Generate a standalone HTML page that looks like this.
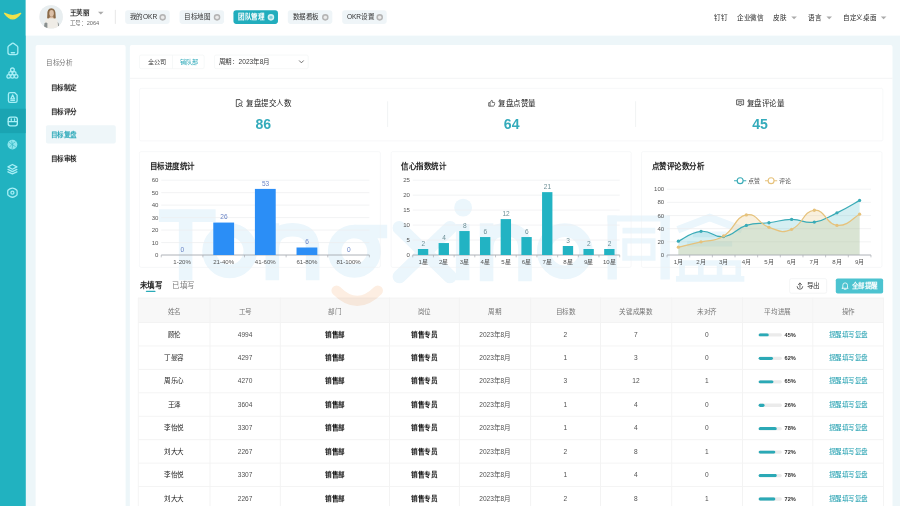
<!DOCTYPE html>
<html lang="zh-CN"><head><meta charset="utf-8">
<style>
*{margin:0;padding:0;box-sizing:border-box}
html,body{width:900px;height:506px;overflow:hidden;background:#edf6f9}
body{font-family:"Liberation Sans",sans-serif;color:#333}
#root{position:absolute;left:0;top:0;width:1920px;height:1080px;transform:scale(0.46875);transform-origin:0 0;background:#edf6f9;overflow:hidden}
.abs{position:absolute}
#side{left:0;top:0;width:55px;height:1080px;background:#21b2c0}
#side svg{position:absolute;left:0;top:0}
#hdr{left:55px;top:0;width:1865px;height:76px;background:#fff}
#subnav{left:76px;top:96px;width:192px;height:1000px;background:#fff;border-radius:4px}
#main{left:277px;top:96px;width:1627px;height:1000px;background:#fff;border-radius:4px}
.avatar{left:84px;top:11px;width:50px;height:50px;border-radius:50%;overflow:hidden;background:#e9ecec}
.uname{left:149px;top:17px;font-size:14px;font-weight:bold;color:#333;line-height:20px}
.uid{left:149px;top:40px;font-size:12px;color:#6a6a6a;line-height:18px}
.caret{width:0;height:0;border-left:6px solid transparent;border-right:6px solid transparent;border-top:6px solid #aaa}
.vdiv{left:245px;top:21px;width:2px;height:30px;background:#e6e6e6}
.tab{top:22px;height:29px;border-radius:6px;background:#eff5f8;font-size:14px;color:#333;font-weight:500;line-height:29px;padding-left:10px;white-space:nowrap}
.tab i{position:absolute;top:8px;width:14px;height:14px;border-radius:50%;border:3px solid #b3b3b3;background:#dcdcdc}
.tab i:after{content:"";position:absolute;left:1px;top:1px;width:6px;height:6px;border-radius:50%;background:#ececec}
.tab.on{background:#21adbd;color:#fff;font-weight:bold}
.tab.on i{border-color:#d5f1f4;background:#a8e0e7}
.tab.on i:after{background:#7fd0da}
.rt{top:28px;font-size:14px;color:#2a2a2a;font-weight:500;line-height:20px;white-space:nowrap}

.sn{left:108px;font-size:14px;color:#222;line-height:20px;font-weight:bold}
.sntitle{left:98px;top:123px;font-size:14px;color:#777;line-height:20px}
.snact{left:98px;top:267px;width:149px;height:39px;background:#eef6f9;border-radius:4px}
.bgrp{left:297px;top:117px;width:139px;height:30px;border:1px solid #eceff1;border-radius:4px;font-size:13px;line-height:28px}
.sel{left:457px;top:117px;width:201px;height:30px;border:1px solid #eceff1;border-radius:4px;font-size:14px;line-height:28px;color:#3a3a3a;padding-left:9px}
.hline{left:277px;top:166px;width:1627px;height:2px;background:#f2f4f5}
.card{border:1px solid #eef1f3;border-radius:4px;background:transparent}
.stl{font-size:14px;color:#333;line-height:20px;white-space:nowrap}
.snum{font-size:30px;font-weight:bold;color:#34abbb;line-height:34px;text-align:center}

.scol{top:188px;width:529px;height:113px}
.scol .stl{position:absolute;left:0;right:0;top:23px;text-align:center;font-size:16px;color:#222;font-weight:500}
.scol .snum{position:absolute;left:0;right:0;top:60px}
.sdiv{top:216px;width:2px;height:55px;background:#f0f2f3}

.th{font-size:14px;color:#777;text-align:center;white-space:nowrap;padding-top:4px}
.td{font-size:14px;color:#555;text-align:center;white-space:nowrap}
.tn{color:#222;font-weight:500}
.tg{color:#505050}
.tb{color:#111;font-weight:bold}
.ta{color:#1c9dae;font-weight:500}
.pt{display:inline-block;position:relative;width:50px;height:7px;border-radius:4px;background:#ebebeb;vertical-align:middle;margin-right:6px;overflow:hidden}
.pf{position:absolute;left:0;top:0;height:7px;border-radius:4px;background:#2ba9b6}
.pp{display:inline-block;width:26px;text-align:left;font-size:12px;color:#333;font-weight:bold;vertical-align:middle}
.ttab{top:597px;font-size:16px;line-height:24px;white-space:nowrap}
.btn{top:594px;height:32px;border-radius:4px;font-size:14px;line-height:30px;white-space:nowrap;font-weight:500}
.ctitle{position:absolute;left:21px;top:21px;font-size:16px;font-weight:bold;color:#222;line-height:22px;white-space:nowrap}
</style></head>
<body><div id="root">
<div id="side" class="abs">
<svg width="55" height="440" viewBox="0 0 55 440">
 <path d="M10 28.5 Q27 52 44 28.5 Q27 38 10 28.5 Z" fill="#efe24a" stroke="#efe24a" stroke-width="3" stroke-linejoin="round"/>
 <g fill="none" stroke="#a6eef5" stroke-width="2.8" stroke-linejoin="round" stroke-linecap="round">
  <path d="M17 101 L17 112 Q17 116.5 21.5 116.5 L33.5 116.5 Q38 116.5 38 112 L38 101 Q38 99 36 97.5 L29 92.5 Q27.5 91.5 26 92.5 L19 97.5 Q17 99 17 101 Z"/>
  <path d="M24 112.5 L31 112.5"/>
  <circle cx="26.5" cy="149" r="4"/>
  <circle cx="22.5" cy="156.5" r="3.8"/><circle cx="30.5" cy="156.5" r="3.8"/>
  <circle cx="18.5" cy="163" r="3.8"/><circle cx="26.5" cy="163" r="3.8"/><circle cx="34.5" cy="163" r="3.8"/>
  <path d="M18 201 L18 215 Q18 218.5 21.5 218.5 L33 218.5 Q36.5 218.5 36.5 215 L36.5 203 L31 197.5 L21.5 197.5 Q18 197.5 18 201 Z"/>
  <path d="M27 202.5 L31 211 L23 211 Z"/><path d="M23 214 L31 214"/>
 </g>
 <rect x="0" y="232" width="55" height="52" fill="#1aa4b2"/>
 <g fill="none" stroke="#aaf1f7" stroke-width="2.8" stroke-linejoin="round" stroke-linecap="round">
  <path d="M17.5 255 Q17.5 250 22.5 250 L32.5 250 Q37 250 37 255 L37 264 Q37 268.5 32.5 268.5 L22 268.5 Q17.5 268.5 17.5 264 Z"/>
  <path d="M17.5 259.5 L37 259.5"/><path d="M24 253.5 L24 256.5 M31 253.5 L31 256.5"/>
 </g>
 <circle cx="26.5" cy="308.5" r="10.5" fill="#9feef5" fill-opacity="0.85"/>
 <g fill="none" stroke="#3cbcc8" stroke-width="1.6" stroke-linecap="round">
  <path d="M20 304 L33 313 M21 313 Q26 306 32 303 M25 301 Q29 309 26 317"/>
 </g>
 <g fill="none" stroke="#a6eef5" stroke-width="2.8" stroke-linejoin="round" stroke-linecap="round">
  <path d="M26.5 351 L36 356 L26.5 361 L17 356 Z"/>
  <path d="M17 361.5 L26.5 366 L36 361.5"/><path d="M17 366.5 L26.5 371 L36 366.5"/>
  <path d="M22 402.5 Q26.5 400 31 402.5 L35 405 Q36.5 406 36.5 408 L36.5 414 Q36.5 416 35 417 L31 419.5 Q26.5 422 22 419.5 L18 417 Q16.5 416 16.5 414 L16.5 408 Q16.5 406 18 405 Z"/>
  <circle cx="26.5" cy="411" r="3.2"/>
 </g>
</svg>
</div>
<div id="hdr" class="abs"></div>
<div class="abs avatar">
 <svg width="50" height="50" viewBox="0 0 50 50">
  <rect width="50" height="50" fill="#e8eef0"/>
  <path d="M9 50 L11 38 Q12 29 20 27 L31 27 Q39 29 40 38 L42 50 Z" fill="#efece6"/>
  <path d="M9 50 L11 39 Q13 36 17 38 L17 50Z" fill="#8a9090"/>
  <path d="M39 36 Q42 38 42 44 L40 46 Z" fill="#8f9595"/>
  <path d="M17 20 Q16 7 25.5 6.5 Q35 7 34.5 20 L35 28 Q30 29 29 27 L22 27 Q20 29 16.5 28 Z" fill="#8a6a48"/>
  <ellipse cx="26" cy="17.5" rx="4.8" ry="7" fill="#dcc0a8"/>
  <path d="M22 24 L30 24 L30 28 L22 28Z" fill="#d8bba3"/>
 </svg>
</div>
<div class="abs uname">王芙丽</div>
<div class="abs caret" style="left:209px;top:25px"></div>
<div class="abs uid">工号：2064</div>
<div class="abs vdiv"></div>
<div class="abs tab" style="left:267px;width:95px">我的OKR<i style="left:73px"></i></div>
<div class="abs tab" style="left:383px;width:95px">目标地图<i style="left:73px"></i></div>
<div class="abs tab on" style="left:498px;width:95px">团队管理<i style="left:73px"></i></div>
<div class="abs tab" style="left:614px;width:95px">数据看板<i style="left:73px"></i></div>
<div class="abs tab" style="left:730px;width:95px">OKR设置<i style="left:73px"></i></div>
<div class="abs rt" style="left:1524px">钉钉</div>
<div class="abs rt" style="left:1573px">企业微信</div>
<div class="abs rt" style="left:1649px">皮肤</div>
<div class="abs caret" style="left:1688px;top:35px"></div>
<div class="abs rt" style="left:1724px">语言</div>
<div class="abs caret" style="left:1763px;top:35px"></div>
<div class="abs rt" style="left:1799px">自定义桌面</div>
<div class="abs caret" style="left:1879px;top:35px"></div>
<div id="subnav" class="abs"></div>
<div id="main" class="abs"></div>
<svg class="abs" style="left:0;top:0;pointer-events:none" width="1920" height="1080" viewBox="0 0 1920 1080">
 <g fill="none" stroke="#ebf6fc" stroke-width="29" stroke-linecap="butt">
  <path d="M339 460 L460 460" stroke-width="27"/><path d="M396 447 L396 598"/>
  <circle cx="490" cy="535" r="44"/>
  <path d="M581 598 L581 476 M581 532 Q581 490 624 490 Q667 490 667 532 L667 598"/>
  <circle cx="756" cy="536" r="42"/>
  <path d="M756 494 L826 494"/>
  <path d="M852 486 L960 590 M960 486 L852 590" stroke-linecap="round"/>
  <path d="M987 478 L987 598"/>
  <path d="M1038 600 L1038 476 M1038 532 Q1038 490 1079 490 Q1120 490 1120 532 L1120 600"/>
  <circle cx="1205" cy="536" r="45"/>
 </g>
 <circle cx="988" cy="443" r="19" fill="#ebf6fc"/>
 
 <g fill="none" stroke="#ebf6fc" stroke-width="12" stroke-linecap="butt">
  <path d="M1306 596 L1306 459.5 M1419 596 L1419 459.5" stroke-width="20"/>
  <path d="M1296 466 L1429 466" stroke-width="13"/>
  <path d="M1328 492 L1398 492"/>
  <path d="M1333 514 L1393 514 L1393 551 L1333 551 Z" stroke-width="11"/>
  <path d="M1446 490 L1514 464 L1583 490" stroke-width="16"/>
  <path d="M1478 500 L1550 500 M1466 520 L1562 520"/>
  <path d="M1455 561 L1575 561 L1575 592 L1455 592 Z M1495 561 L1495 592 M1535 561 L1535 592"/>
  <path d="M1442 595 L1588 595"/>
 </g>
</svg>
<div class="abs snact"></div>
<div class="abs sntitle">目标分析</div>
<div class="abs sn" style="top:177px">目标制定</div>
<div class="abs sn" style="top:228px">目标评分</div>
<div class="abs sn" style="top:277px;color:#2aa8b8">目标复盘</div>
<div class="abs sn" style="top:328px">目标审核</div>
<div class="abs bgrp"><span class="abs" style="left:18px;color:#333">全公司</span><span class="abs" style="left:69px;top:0;width:1px;height:28px;background:#eceff1"></span><span class="abs" style="left:86px;color:#2aa8b8">销队部</span></div>
<div class="abs sel">周期：2023年8月<svg class="abs" style="left:178px;top:9px" width="14" height="10" viewBox="0 0 14 10"><path d="M2 2 L7 7 L12 2" fill="none" stroke="#555" stroke-width="1.8"/></svg></div>
<div class="abs hline"></div>
<div class="abs card" style="left:297px;top:188px;width:1587px;height:113px"></div>
<div class="abs scol" style="left:297px"><div class="stl"><svg width="17" height="18" viewBox="0 0 17 18" style="vertical-align:-2px;margin-right:6px"><path d="M8 16.5 L2 16.5 L2 1.5 L10 1.5 L14 5.5 L14 9" fill="none" stroke="#333" stroke-width="1.8" stroke-linejoin="round"/><circle cx="10.5" cy="12" r="3" fill="none" stroke="#333" stroke-width="1.7"/><path d="M12.7 14.2 L15.5 17" stroke="#333" stroke-width="1.8" stroke-linecap="round"/></svg>复盘提交人数</div><div class="snum">86</div></div>
<div class="abs sdiv" style="left:826px"></div>
<div class="abs scol" style="left:827px"><div class="stl"><svg width="16" height="16" viewBox="0 0 16 16" style="vertical-align:-2px;margin-right:6px"><path d="M1.5 7 L4.5 7 L4.5 14.5 L1.5 14.5 Z M4.5 7 L7.5 2 Q9.5 1.5 9.5 4 L9 6.5 L13.5 6.5 Q15 7 14.5 9 L13 13.5 Q12.5 14.5 11 14.5 L4.5 14.5" fill="none" stroke="#444" stroke-width="1.6" stroke-linejoin="round"/></svg>复盘点赞量</div><div class="snum">64</div></div>
<div class="abs sdiv" style="left:1355px"></div>
<div class="abs scol" style="left:1357px"><div class="stl"><svg width="18" height="17" viewBox="0 0 18 17" style="vertical-align:-2px;margin-right:6px"><path d="M1.5 2 L16.5 2 L16.5 12.5 L11 12.5 L9 15 L7 12.5 L1.5 12.5 Z" fill="none" stroke="#333" stroke-width="1.7" stroke-linejoin="round"/><path d="M4.5 5.8 L13.5 5.8 M4.5 9 L13.5 9" stroke="#333" stroke-width="1.5"/></svg>复盘评论量</div><div class="snum">45</div></div>
<div class="abs card" style="left:297px;top:323px;width:515px;height:248px"><svg class="abs" style="left:-1px;top:-1px" width="515" height="248" viewBox="0 0 515 248" font-family="Liberation Sans, sans-serif">
</svg><div class="ctitle">目标进度统计</div><svg class="abs" style="left:-1px;top:-1px" width="515" height="248" viewBox="0 0 515 248" font-family="Liberation Sans, sans-serif">
<text x="41" y="225.5" font-size="13" fill="#555" text-anchor="end">0</text>
<line x1="47" y1="194.4" x2="491" y2="194.4" stroke="#eceef0" stroke-width="1.5"/>
<text x="41" y="198.9" font-size="13" fill="#555" text-anchor="end">10</text>
<line x1="47" y1="167.8" x2="491" y2="167.8" stroke="#eceef0" stroke-width="1.5"/>
<text x="41" y="172.3" font-size="13" fill="#555" text-anchor="end">20</text>
<line x1="47" y1="141.2" x2="491" y2="141.2" stroke="#eceef0" stroke-width="1.5"/>
<text x="41" y="145.7" font-size="13" fill="#555" text-anchor="end">30</text>
<line x1="47" y1="114.6" x2="491" y2="114.6" stroke="#eceef0" stroke-width="1.5"/>
<text x="41" y="119.1" font-size="13" fill="#555" text-anchor="end">40</text>
<line x1="47" y1="88.0" x2="491" y2="88.0" stroke="#eceef0" stroke-width="1.5"/>
<text x="41" y="92.5" font-size="13" fill="#555" text-anchor="end">50</text>
<line x1="47" y1="61.4" x2="491" y2="61.4" stroke="#eceef0" stroke-width="1.5"/>
<text x="41" y="65.9" font-size="13" fill="#555" text-anchor="end">60</text>
<line x1="47" y1="221" x2="491" y2="221" stroke="#a9adb3" stroke-width="2"/>
<line x1="47.0" y1="221" x2="47.0" y2="226" stroke="#a9adb3" stroke-width="1.5"/>
<line x1="135.8" y1="221" x2="135.8" y2="226" stroke="#a9adb3" stroke-width="1.5"/>
<line x1="224.6" y1="221" x2="224.6" y2="226" stroke="#a9adb3" stroke-width="1.5"/>
<line x1="313.4" y1="221" x2="313.4" y2="226" stroke="#a9adb3" stroke-width="1.5"/>
<line x1="402.2" y1="221" x2="402.2" y2="226" stroke="#a9adb3" stroke-width="1.5"/>
<line x1="491.0" y1="221" x2="491.0" y2="226" stroke="#a9adb3" stroke-width="1.5"/>
<text x="91.9" y="214.0" font-size="14" fill="#6a84c6" text-anchor="middle">0</text>
<text x="91.4" y="240.0" font-size="13" fill="#555" text-anchor="middle">1-20%</text>
<rect x="158.0" y="151.8" width="44.4" height="69.2" fill="#2b8ef6"/>
<text x="180.7" y="144.8" font-size="14" fill="#6a84c6" text-anchor="middle">26</text>
<text x="180.2" y="240.0" font-size="13" fill="#555" text-anchor="middle">21-40%</text>
<rect x="246.8" y="80.0" width="44.4" height="141.0" fill="#2b8ef6"/>
<text x="269.5" y="73.0" font-size="14" fill="#6a84c6" text-anchor="middle">53</text>
<text x="269.0" y="240.0" font-size="13" fill="#555" text-anchor="middle">41-60%</text>
<rect x="335.6" y="205.0" width="44.4" height="16.0" fill="#2b8ef6"/>
<text x="358.3" y="198.0" font-size="14" fill="#6a84c6" text-anchor="middle">6</text>
<text x="357.8" y="240.0" font-size="13" fill="#555" text-anchor="middle">61-80%</text>
<text x="447.1" y="214.0" font-size="14" fill="#6a84c6" text-anchor="middle">0</text>
<text x="446.6" y="240.0" font-size="13" fill="#555" text-anchor="middle">81-100%</text>
</svg></div>
<div class="abs card" style="left:834px;top:323px;width:513px;height:248px"><svg class="abs" style="left:-1px;top:-1px" width="513" height="248" viewBox="0 0 513 248" font-family="Liberation Sans, sans-serif">
</svg><div class="ctitle">信心指数统计</div><svg class="abs" style="left:-1px;top:-1px" width="513" height="248" viewBox="0 0 513 248" font-family="Liberation Sans, sans-serif">
<text x="40.5" y="225.5" font-size="13" fill="#555" text-anchor="end">0</text>
<line x1="46.5" y1="189.1" x2="488" y2="189.1" stroke="#eceef0" stroke-width="1.5"/>
<text x="40.5" y="193.6" font-size="13" fill="#555" text-anchor="end">5</text>
<line x1="46.5" y1="157.2" x2="488" y2="157.2" stroke="#eceef0" stroke-width="1.5"/>
<text x="40.5" y="161.7" font-size="13" fill="#555" text-anchor="end">10</text>
<line x1="46.5" y1="125.2" x2="488" y2="125.2" stroke="#eceef0" stroke-width="1.5"/>
<text x="40.5" y="129.7" font-size="13" fill="#555" text-anchor="end">15</text>
<line x1="46.5" y1="93.3" x2="488" y2="93.3" stroke="#eceef0" stroke-width="1.5"/>
<text x="40.5" y="97.8" font-size="13" fill="#555" text-anchor="end">20</text>
<line x1="46.5" y1="61.4" x2="488" y2="61.4" stroke="#eceef0" stroke-width="1.5"/>
<text x="40.5" y="65.9" font-size="13" fill="#555" text-anchor="end">25</text>
<line x1="46.5" y1="221" x2="488" y2="221" stroke="#a9adb3" stroke-width="2"/>
<line x1="46.5" y1="221" x2="46.5" y2="226" stroke="#a9adb3" stroke-width="1.5"/>
<line x1="90.7" y1="221" x2="90.7" y2="226" stroke="#a9adb3" stroke-width="1.5"/>
<line x1="134.8" y1="221" x2="134.8" y2="226" stroke="#a9adb3" stroke-width="1.5"/>
<line x1="178.9" y1="221" x2="178.9" y2="226" stroke="#a9adb3" stroke-width="1.5"/>
<line x1="223.1" y1="221" x2="223.1" y2="226" stroke="#a9adb3" stroke-width="1.5"/>
<line x1="267.2" y1="221" x2="267.2" y2="226" stroke="#a9adb3" stroke-width="1.5"/>
<line x1="311.4" y1="221" x2="311.4" y2="226" stroke="#a9adb3" stroke-width="1.5"/>
<line x1="355.6" y1="221" x2="355.6" y2="226" stroke="#a9adb3" stroke-width="1.5"/>
<line x1="399.7" y1="221" x2="399.7" y2="226" stroke="#a9adb3" stroke-width="1.5"/>
<line x1="443.8" y1="221" x2="443.8" y2="226" stroke="#a9adb3" stroke-width="1.5"/>
<line x1="488.0" y1="221" x2="488.0" y2="226" stroke="#a9adb3" stroke-width="1.5"/>
<rect x="57.5" y="208.2" width="22.1" height="12.8" fill="#22b3c3"/>
<text x="69.1" y="201.2" font-size="14" fill="#6d8f96" text-anchor="middle">2</text>
<text x="68.6" y="240.0" font-size="13" fill="#555" text-anchor="middle">1星</text>
<rect x="101.7" y="195.5" width="22.1" height="25.5" fill="#22b3c3"/>
<text x="113.2" y="188.5" font-size="14" fill="#6d8f96" text-anchor="middle">4</text>
<text x="112.7" y="240.0" font-size="13" fill="#555" text-anchor="middle">2星</text>
<rect x="145.8" y="169.9" width="22.1" height="51.1" fill="#22b3c3"/>
<text x="157.4" y="162.9" font-size="14" fill="#6d8f96" text-anchor="middle">8</text>
<text x="156.9" y="240.0" font-size="13" fill="#555" text-anchor="middle">3星</text>
<rect x="190.0" y="182.7" width="22.1" height="38.3" fill="#22b3c3"/>
<text x="201.5" y="175.7" font-size="14" fill="#6d8f96" text-anchor="middle">6</text>
<text x="201.0" y="240.0" font-size="13" fill="#555" text-anchor="middle">4星</text>
<rect x="234.1" y="144.4" width="22.1" height="76.6" fill="#22b3c3"/>
<text x="245.7" y="137.4" font-size="14" fill="#6d8f96" text-anchor="middle">12</text>
<text x="245.2" y="240.0" font-size="13" fill="#555" text-anchor="middle">5星</text>
<rect x="278.3" y="182.7" width="22.1" height="38.3" fill="#22b3c3"/>
<text x="289.8" y="175.7" font-size="14" fill="#6d8f96" text-anchor="middle">6</text>
<text x="289.3" y="240.0" font-size="13" fill="#555" text-anchor="middle">6星</text>
<rect x="322.4" y="86.9" width="22.1" height="134.1" fill="#22b3c3"/>
<text x="334.0" y="79.9" font-size="14" fill="#6d8f96" text-anchor="middle">21</text>
<text x="333.5" y="240.0" font-size="13" fill="#555" text-anchor="middle">7星</text>
<rect x="366.6" y="201.8" width="22.1" height="19.2" fill="#22b3c3"/>
<text x="378.1" y="194.8" font-size="14" fill="#6d8f96" text-anchor="middle">3</text>
<text x="377.6" y="240.0" font-size="13" fill="#555" text-anchor="middle">8星</text>
<rect x="410.7" y="208.2" width="22.1" height="12.8" fill="#22b3c3"/>
<text x="422.3" y="201.2" font-size="14" fill="#6d8f96" text-anchor="middle">2</text>
<text x="421.8" y="240.0" font-size="13" fill="#555" text-anchor="middle">9星</text>
<rect x="454.9" y="208.2" width="22.1" height="12.8" fill="#22b3c3"/>
<text x="466.4" y="201.2" font-size="14" fill="#6d8f96" text-anchor="middle">2</text>
<text x="465.9" y="240.0" font-size="13" fill="#555" text-anchor="middle">10星</text>
</svg></div>
<div class="abs card" style="left:1368px;top:323px;width:514px;height:248px"><svg class="abs" style="left:-1px;top:-1px" width="514" height="248" viewBox="0 0 514 248" font-family="Liberation Sans, sans-serif">
</svg><div class="ctitle">点赞评论数分析</div><svg class="abs" style="left:-1px;top:-1px" width="514" height="248" viewBox="0 0 514 248" font-family="Liberation Sans, sans-serif">
<text x="49" y="225.5" font-size="13" fill="#555" text-anchor="end">0</text>
<line x1="55" y1="192.9" x2="490" y2="192.9" stroke="#eceef0" stroke-width="1.5"/>
<text x="49" y="197.4" font-size="13" fill="#555" text-anchor="end">20</text>
<line x1="55" y1="164.8" x2="490" y2="164.8" stroke="#eceef0" stroke-width="1.5"/>
<text x="49" y="169.3" font-size="13" fill="#555" text-anchor="end">40</text>
<line x1="55" y1="136.8" x2="490" y2="136.8" stroke="#eceef0" stroke-width="1.5"/>
<text x="49" y="141.3" font-size="13" fill="#555" text-anchor="end">60</text>
<line x1="55" y1="108.7" x2="490" y2="108.7" stroke="#eceef0" stroke-width="1.5"/>
<text x="49" y="113.2" font-size="13" fill="#555" text-anchor="end">80</text>
<line x1="55" y1="80.6" x2="490" y2="80.6" stroke="#eceef0" stroke-width="1.5"/>
<text x="49" y="85.1" font-size="13" fill="#555" text-anchor="end">100</text>
<path d="M79.2 191.5 C91.2 186.3 103.3 172.9 127.5 170.5 C151.7 168.0 151.7 184.8 175.8 181.7 C200.0 178.5 200.0 165.2 224.2 157.8 C248.3 150.4 248.3 155.4 272.5 152.2 C296.7 149.0 296.7 145.5 320.8 145.2 C345.0 144.8 345.0 154.3 369.2 150.8 C393.3 147.3 393.3 142.7 417.5 131.1 C441.7 119.6 453.8 111.1 465.8 104.5 L465.8 221 L79.2 221 Z" fill="#3eb4c2" fill-opacity="0.22"/>
<path d="M79.2 204.2 C91.2 201.3 103.3 198.9 127.5 192.9 C151.7 187.0 151.7 194.7 175.8 180.3 C200.0 165.9 200.0 139.9 224.2 135.4 C248.3 130.8 248.3 154.3 272.5 162.0 C296.7 169.8 296.7 175.4 320.8 166.2 C345.0 157.1 345.0 127.6 369.2 125.5 C393.3 123.4 393.3 155.7 417.5 157.8 C441.7 159.9 453.8 139.9 465.8 134.0 L465.8 221 L79.2 221 Z" fill="#e8c477" fill-opacity="0.25"/>
<line x1="55" y1="221" x2="490" y2="221" stroke="#a9adb3" stroke-width="2"/>
<line x1="55.0" y1="221" x2="55.0" y2="226" stroke="#a9adb3" stroke-width="1.5"/>
<line x1="103.3" y1="221" x2="103.3" y2="226" stroke="#a9adb3" stroke-width="1.5"/>
<line x1="151.7" y1="221" x2="151.7" y2="226" stroke="#a9adb3" stroke-width="1.5"/>
<line x1="200.0" y1="221" x2="200.0" y2="226" stroke="#a9adb3" stroke-width="1.5"/>
<line x1="248.3" y1="221" x2="248.3" y2="226" stroke="#a9adb3" stroke-width="1.5"/>
<line x1="296.7" y1="221" x2="296.7" y2="226" stroke="#a9adb3" stroke-width="1.5"/>
<line x1="345.0" y1="221" x2="345.0" y2="226" stroke="#a9adb3" stroke-width="1.5"/>
<line x1="393.3" y1="221" x2="393.3" y2="226" stroke="#a9adb3" stroke-width="1.5"/>
<line x1="441.7" y1="221" x2="441.7" y2="226" stroke="#a9adb3" stroke-width="1.5"/>
<line x1="490.0" y1="221" x2="490.0" y2="226" stroke="#a9adb3" stroke-width="1.5"/>
<path d="M79.2 191.5 C91.2 186.3 103.3 172.9 127.5 170.5 C151.7 168.0 151.7 184.8 175.8 181.7 C200.0 178.5 200.0 165.2 224.2 157.8 C248.3 150.4 248.3 155.4 272.5 152.2 C296.7 149.0 296.7 145.5 320.8 145.2 C345.0 144.8 345.0 154.3 369.2 150.8 C393.3 147.3 393.3 142.7 417.5 131.1 C441.7 119.6 453.8 111.1 465.8 104.5" fill="none" stroke="#3aabb7" stroke-width="2.6"/>
<path d="M79.2 204.2 C91.2 201.3 103.3 198.9 127.5 192.9 C151.7 187.0 151.7 194.7 175.8 180.3 C200.0 165.9 200.0 139.9 224.2 135.4 C248.3 130.8 248.3 154.3 272.5 162.0 C296.7 169.8 296.7 175.4 320.8 166.2 C345.0 157.1 345.0 127.6 369.2 125.5 C393.3 123.4 393.3 155.7 417.5 157.8 C441.7 159.9 453.8 139.9 465.8 134.0" fill="none" stroke="#e6c27c" stroke-width="2.6"/>
<circle cx="79.2" cy="191.5" r="3.5" fill="#3aabb7"/>
<circle cx="127.5" cy="170.5" r="3.5" fill="#3aabb7"/>
<circle cx="175.8" cy="181.7" r="3.5" fill="#3aabb7"/>
<circle cx="224.2" cy="157.8" r="3.5" fill="#3aabb7"/>
<circle cx="272.5" cy="152.2" r="3.5" fill="#3aabb7"/>
<circle cx="320.8" cy="145.2" r="3.5" fill="#3aabb7"/>
<circle cx="369.2" cy="150.8" r="3.5" fill="#3aabb7"/>
<circle cx="417.5" cy="131.1" r="3.5" fill="#3aabb7"/>
<circle cx="465.8" cy="104.5" r="3.5" fill="#3aabb7"/>
<circle cx="79.2" cy="204.2" r="3.5" fill="#e6c27c"/>
<circle cx="127.5" cy="192.9" r="3.5" fill="#e6c27c"/>
<circle cx="175.8" cy="180.3" r="3.5" fill="#e6c27c"/>
<circle cx="224.2" cy="135.4" r="3.5" fill="#e6c27c"/>
<circle cx="272.5" cy="162.0" r="3.5" fill="#e6c27c"/>
<circle cx="320.8" cy="166.2" r="3.5" fill="#e6c27c"/>
<circle cx="369.2" cy="125.5" r="3.5" fill="#e6c27c"/>
<circle cx="417.5" cy="157.8" r="3.5" fill="#e6c27c"/>
<circle cx="465.8" cy="134.0" r="3.5" fill="#e6c27c"/>
<text x="79.2" y="240.0" font-size="13" fill="#555" text-anchor="middle">1月</text>
<text x="127.5" y="240.0" font-size="13" fill="#555" text-anchor="middle">2月</text>
<text x="175.8" y="240.0" font-size="13" fill="#555" text-anchor="middle">3月</text>
<text x="224.2" y="240.0" font-size="13" fill="#555" text-anchor="middle">4月</text>
<text x="272.5" y="240.0" font-size="13" fill="#555" text-anchor="middle">5月</text>
<text x="320.8" y="240.0" font-size="13" fill="#555" text-anchor="middle">6月</text>
<text x="369.2" y="240.0" font-size="13" fill="#555" text-anchor="middle">7月</text>
<text x="417.5" y="240.0" font-size="13" fill="#555" text-anchor="middle">8月</text>
<text x="465.8" y="240.0" font-size="13" fill="#555" text-anchor="middle">9月</text>
<line x1="198" y1="62.5" x2="224" y2="62.5" stroke="#3aabb7" stroke-width="2.4"/><circle cx="211" cy="62.5" r="6.3" fill="#fff" stroke="#3aabb7" stroke-width="2.4"/>
<text x="228" y="67" font-size="13" fill="#555">点赞</text>
<line x1="264" y1="62.5" x2="290" y2="62.5" stroke="#e6c27c" stroke-width="2.4"/><circle cx="277" cy="62.5" r="6.3" fill="#fff" stroke="#e6c27c" stroke-width="2.4"/>
<text x="294" y="67" font-size="13" fill="#555">评论</text>
</svg></div>

<div class="abs ttab" style="left:298px;color:#222;font-weight:bold">未填写</div>
<div class="abs" style="left:311px;top:620px;width:21px;height:3px;border-radius:2px;background:#2aaab8"></div>
<div class="abs ttab" style="left:367px;color:#777">已填写</div>
<div class="abs btn" style="left:1684px;width:80px;border:1px solid #e8eaec;color:#333;padding-left:36px"><svg class="abs" style="left:13px;top:7px" width="17" height="17" viewBox="0 0 17 17"><path d="M8.5 11 L8.5 2 M5 5.2 L8.5 1.8 L12 5.2 M2.5 9.5 Q2.5 15 8.5 15 Q14.5 15 14.5 9.5" fill="none" stroke="#444" stroke-width="1.7" stroke-linecap="round" stroke-linejoin="round"/></svg>导出</div>
<div class="abs btn" style="left:1783px;width:101px;background:#4cc3d0;color:#fff;font-weight:bold;padding-left:34px;line-height:32px"><svg class="abs" style="left:12px;top:7px" width="16" height="18" viewBox="0 0 16 18"><path d="M3 13 L3 7.5 Q3 2.5 8 2.5 Q13 2.5 13 7.5 L13 13 L14.5 14 L1.5 14 Z M6 16 L10 16" fill="none" stroke="#fff" stroke-width="1.7" stroke-linejoin="round" stroke-linecap="round"/></svg>全部提醒</div>
<div class="abs" style="left:294.8px;top:635px;width:1590.2px;height:53px;background:#f8f8f8"></div>
<div class="abs" style="left:294.8px;top:687px;width:1590.2px;height:2px;background:#f3f3f3"></div>
<div class="abs" style="left:294.8px;top:737px;width:1590.2px;height:2px;background:#f3f3f3"></div>
<div class="abs" style="left:294.8px;top:787px;width:1590.2px;height:2px;background:#f3f3f3"></div>
<div class="abs" style="left:294.8px;top:837px;width:1590.2px;height:2px;background:#f3f3f3"></div>
<div class="abs" style="left:294.8px;top:887px;width:1590.2px;height:2px;background:#f3f3f3"></div>
<div class="abs" style="left:294.8px;top:937px;width:1590.2px;height:2px;background:#f3f3f3"></div>
<div class="abs" style="left:294.8px;top:987px;width:1590.2px;height:2px;background:#f3f3f3"></div>
<div class="abs" style="left:294.8px;top:1037px;width:1590.2px;height:2px;background:#f3f3f3"></div>
<div class="abs" style="left:294.8px;top:1087px;width:1590.2px;height:2px;background:#f3f3f3"></div>
<div class="abs" style="left:294.8px;top:635px;width:1590.2px;height:2px;background:#f3f3f3"></div>
<div class="abs" style="left:293.8px;top:635px;width:2px;height:453px;background:#f3f3f3"></div>
<div class="abs" style="left:447.0px;top:635px;width:2px;height:453px;background:#f3f3f3"></div>
<div class="abs" style="left:596.8px;top:635px;width:2px;height:453px;background:#f3f3f3"></div>
<div class="abs" style="left:830.4px;top:635px;width:2px;height:453px;background:#f3f3f3"></div>
<div class="abs" style="left:978.8px;top:635px;width:2px;height:453px;background:#f3f3f3"></div>
<div class="abs" style="left:1131.0px;top:635px;width:2px;height:453px;background:#f3f3f3"></div>
<div class="abs" style="left:1279.6px;top:635px;width:2px;height:453px;background:#f3f3f3"></div>
<div class="abs" style="left:1431.5px;top:635px;width:2px;height:453px;background:#f3f3f3"></div>
<div class="abs" style="left:1582.6px;top:635px;width:2px;height:453px;background:#f3f3f3"></div>
<div class="abs" style="left:1733.0px;top:635px;width:2px;height:453px;background:#f3f3f3"></div>
<div class="abs" style="left:1884.0px;top:635px;width:2px;height:453px;background:#f3f3f3"></div>
<div class="abs th" style="left:294.8px;top:635px;width:153.2px;height:53px;line-height:53px">姓名</div>
<div class="abs th" style="left:448.0px;top:635px;width:149.8px;height:53px;line-height:53px">工号</div>
<div class="abs th" style="left:597.8px;top:635px;width:233.6px;height:53px;line-height:53px">部门</div>
<div class="abs th" style="left:831.4px;top:635px;width:148.4px;height:53px;line-height:53px">岗位</div>
<div class="abs th" style="left:979.8px;top:635px;width:152.2px;height:53px;line-height:53px">周期</div>
<div class="abs th" style="left:1132.0px;top:635px;width:148.6px;height:53px;line-height:53px">目标数</div>
<div class="abs th" style="left:1280.6px;top:635px;width:151.9px;height:53px;line-height:53px">关键成果数</div>
<div class="abs th" style="left:1432.5px;top:635px;width:151.1px;height:53px;line-height:53px">未对齐</div>
<div class="abs th" style="left:1583.6px;top:635px;width:150.4px;height:53px;line-height:53px">平均进展</div>
<div class="abs th" style="left:1734.0px;top:635px;width:151.0px;height:53px;line-height:53px">操作</div>
<div class="abs td tn" style="left:294.8px;top:688px;width:153.2px;height:50px;line-height:50px">顾伦</div>
<div class="abs td tg" style="left:448.0px;top:688px;width:149.8px;height:50px;line-height:50px">4994</div>
<div class="abs td tb" style="left:597.8px;top:688px;width:233.6px;height:50px;line-height:50px">销售部</div>
<div class="abs td tb" style="left:831.4px;top:688px;width:148.4px;height:50px;line-height:50px">销售专员</div>
<div class="abs td tg" style="left:979.8px;top:688px;width:152.2px;height:50px;line-height:50px">2023年8月</div>
<div class="abs td tg" style="left:1132.0px;top:688px;width:148.6px;height:50px;line-height:50px">2</div>
<div class="abs td tg" style="left:1280.6px;top:688px;width:151.9px;height:50px;line-height:50px">7</div>
<div class="abs td tg" style="left:1432.5px;top:688px;width:151.1px;height:50px;line-height:50px">0</div>
<div class="abs td" style="left:1583.6px;top:688px;width:150.4px;height:50px;line-height:50px"><span class="pt"><span class="pf" style="width:45%"></span></span><span class="pp">45%</span></div>
<div class="abs td ta" style="left:1734.0px;top:688px;width:151.0px;height:50px;line-height:50px">提醒填写复盘</div>
<div class="abs td tn" style="left:294.8px;top:738px;width:153.2px;height:50px;line-height:50px">丁曼容</div>
<div class="abs td tg" style="left:448.0px;top:738px;width:149.8px;height:50px;line-height:50px">4297</div>
<div class="abs td tb" style="left:597.8px;top:738px;width:233.6px;height:50px;line-height:50px">销售部</div>
<div class="abs td tb" style="left:831.4px;top:738px;width:148.4px;height:50px;line-height:50px">销售专员</div>
<div class="abs td tg" style="left:979.8px;top:738px;width:152.2px;height:50px;line-height:50px">2023年8月</div>
<div class="abs td tg" style="left:1132.0px;top:738px;width:148.6px;height:50px;line-height:50px">1</div>
<div class="abs td tg" style="left:1280.6px;top:738px;width:151.9px;height:50px;line-height:50px">3</div>
<div class="abs td tg" style="left:1432.5px;top:738px;width:151.1px;height:50px;line-height:50px">0</div>
<div class="abs td" style="left:1583.6px;top:738px;width:150.4px;height:50px;line-height:50px"><span class="pt"><span class="pf" style="width:62%"></span></span><span class="pp">62%</span></div>
<div class="abs td ta" style="left:1734.0px;top:738px;width:151.0px;height:50px;line-height:50px">提醒填写复盘</div>
<div class="abs td tn" style="left:294.8px;top:788px;width:153.2px;height:50px;line-height:50px">周乐心</div>
<div class="abs td tg" style="left:448.0px;top:788px;width:149.8px;height:50px;line-height:50px">4270</div>
<div class="abs td tb" style="left:597.8px;top:788px;width:233.6px;height:50px;line-height:50px">销售部</div>
<div class="abs td tb" style="left:831.4px;top:788px;width:148.4px;height:50px;line-height:50px">销售专员</div>
<div class="abs td tg" style="left:979.8px;top:788px;width:152.2px;height:50px;line-height:50px">2023年8月</div>
<div class="abs td tg" style="left:1132.0px;top:788px;width:148.6px;height:50px;line-height:50px">3</div>
<div class="abs td tg" style="left:1280.6px;top:788px;width:151.9px;height:50px;line-height:50px">12</div>
<div class="abs td tg" style="left:1432.5px;top:788px;width:151.1px;height:50px;line-height:50px">1</div>
<div class="abs td" style="left:1583.6px;top:788px;width:150.4px;height:50px;line-height:50px"><span class="pt"><span class="pf" style="width:65%"></span></span><span class="pp">65%</span></div>
<div class="abs td ta" style="left:1734.0px;top:788px;width:151.0px;height:50px;line-height:50px">提醒填写复盘</div>
<div class="abs td tn" style="left:294.8px;top:838px;width:153.2px;height:50px;line-height:50px">王泽</div>
<div class="abs td tg" style="left:448.0px;top:838px;width:149.8px;height:50px;line-height:50px">3604</div>
<div class="abs td tb" style="left:597.8px;top:838px;width:233.6px;height:50px;line-height:50px">销售部</div>
<div class="abs td tb" style="left:831.4px;top:838px;width:148.4px;height:50px;line-height:50px">销售专员</div>
<div class="abs td tg" style="left:979.8px;top:838px;width:152.2px;height:50px;line-height:50px">2023年8月</div>
<div class="abs td tg" style="left:1132.0px;top:838px;width:148.6px;height:50px;line-height:50px">1</div>
<div class="abs td tg" style="left:1280.6px;top:838px;width:151.9px;height:50px;line-height:50px">4</div>
<div class="abs td tg" style="left:1432.5px;top:838px;width:151.1px;height:50px;line-height:50px">0</div>
<div class="abs td" style="left:1583.6px;top:838px;width:150.4px;height:50px;line-height:50px"><span class="pt"><span class="pf" style="width:26%"></span></span><span class="pp">26%</span></div>
<div class="abs td ta" style="left:1734.0px;top:838px;width:151.0px;height:50px;line-height:50px">提醒填写复盘</div>
<div class="abs td tn" style="left:294.8px;top:888px;width:153.2px;height:50px;line-height:50px">李怡悦</div>
<div class="abs td tg" style="left:448.0px;top:888px;width:149.8px;height:50px;line-height:50px">3307</div>
<div class="abs td tb" style="left:597.8px;top:888px;width:233.6px;height:50px;line-height:50px">销售部</div>
<div class="abs td tb" style="left:831.4px;top:888px;width:148.4px;height:50px;line-height:50px">销售专员</div>
<div class="abs td tg" style="left:979.8px;top:888px;width:152.2px;height:50px;line-height:50px">2023年8月</div>
<div class="abs td tg" style="left:1132.0px;top:888px;width:148.6px;height:50px;line-height:50px">1</div>
<div class="abs td tg" style="left:1280.6px;top:888px;width:151.9px;height:50px;line-height:50px">4</div>
<div class="abs td tg" style="left:1432.5px;top:888px;width:151.1px;height:50px;line-height:50px">0</div>
<div class="abs td" style="left:1583.6px;top:888px;width:150.4px;height:50px;line-height:50px"><span class="pt"><span class="pf" style="width:78%"></span></span><span class="pp">78%</span></div>
<div class="abs td ta" style="left:1734.0px;top:888px;width:151.0px;height:50px;line-height:50px">提醒填写复盘</div>
<div class="abs td tn" style="left:294.8px;top:938px;width:153.2px;height:50px;line-height:50px">刘大大</div>
<div class="abs td tg" style="left:448.0px;top:938px;width:149.8px;height:50px;line-height:50px">2267</div>
<div class="abs td tb" style="left:597.8px;top:938px;width:233.6px;height:50px;line-height:50px">销售部</div>
<div class="abs td tb" style="left:831.4px;top:938px;width:148.4px;height:50px;line-height:50px">销售专员</div>
<div class="abs td tg" style="left:979.8px;top:938px;width:152.2px;height:50px;line-height:50px">2023年8月</div>
<div class="abs td tg" style="left:1132.0px;top:938px;width:148.6px;height:50px;line-height:50px">2</div>
<div class="abs td tg" style="left:1280.6px;top:938px;width:151.9px;height:50px;line-height:50px">8</div>
<div class="abs td tg" style="left:1432.5px;top:938px;width:151.1px;height:50px;line-height:50px">1</div>
<div class="abs td" style="left:1583.6px;top:938px;width:150.4px;height:50px;line-height:50px"><span class="pt"><span class="pf" style="width:72%"></span></span><span class="pp">72%</span></div>
<div class="abs td ta" style="left:1734.0px;top:938px;width:151.0px;height:50px;line-height:50px">提醒填写复盘</div>
<div class="abs td tn" style="left:294.8px;top:988px;width:153.2px;height:50px;line-height:50px">李怡悦</div>
<div class="abs td tg" style="left:448.0px;top:988px;width:149.8px;height:50px;line-height:50px">3307</div>
<div class="abs td tb" style="left:597.8px;top:988px;width:233.6px;height:50px;line-height:50px">销售部</div>
<div class="abs td tb" style="left:831.4px;top:988px;width:148.4px;height:50px;line-height:50px">销售专员</div>
<div class="abs td tg" style="left:979.8px;top:988px;width:152.2px;height:50px;line-height:50px">2023年8月</div>
<div class="abs td tg" style="left:1132.0px;top:988px;width:148.6px;height:50px;line-height:50px">1</div>
<div class="abs td tg" style="left:1280.6px;top:988px;width:151.9px;height:50px;line-height:50px">4</div>
<div class="abs td tg" style="left:1432.5px;top:988px;width:151.1px;height:50px;line-height:50px">0</div>
<div class="abs td" style="left:1583.6px;top:988px;width:150.4px;height:50px;line-height:50px"><span class="pt"><span class="pf" style="width:78%"></span></span><span class="pp">78%</span></div>
<div class="abs td ta" style="left:1734.0px;top:988px;width:151.0px;height:50px;line-height:50px">提醒填写复盘</div>
<div class="abs td tn" style="left:294.8px;top:1038px;width:153.2px;height:50px;line-height:50px">刘大大</div>
<div class="abs td tg" style="left:448.0px;top:1038px;width:149.8px;height:50px;line-height:50px">2267</div>
<div class="abs td tb" style="left:597.8px;top:1038px;width:233.6px;height:50px;line-height:50px">销售部</div>
<div class="abs td tb" style="left:831.4px;top:1038px;width:148.4px;height:50px;line-height:50px">销售专员</div>
<div class="abs td tg" style="left:979.8px;top:1038px;width:152.2px;height:50px;line-height:50px">2023年8月</div>
<div class="abs td tg" style="left:1132.0px;top:1038px;width:148.6px;height:50px;line-height:50px">2</div>
<div class="abs td tg" style="left:1280.6px;top:1038px;width:151.9px;height:50px;line-height:50px">8</div>
<div class="abs td tg" style="left:1432.5px;top:1038px;width:151.1px;height:50px;line-height:50px">1</div>
<div class="abs td" style="left:1583.6px;top:1038px;width:150.4px;height:50px;line-height:50px"><span class="pt"><span class="pf" style="width:72%"></span></span><span class="pp">72%</span></div>
<div class="abs td ta" style="left:1734.0px;top:1038px;width:151.0px;height:50px;line-height:50px">提醒填写复盘</div>
<svg class="abs" style="left:0;top:0;mix-blend-mode:multiply;pointer-events:none" width="1920" height="1080" viewBox="0 0 1920 1080"><path d="M718 620 Q762 664 806 620" fill="none" stroke="#fdeee2" stroke-width="22" stroke-linecap="round"/></svg>




</div></body></html>
